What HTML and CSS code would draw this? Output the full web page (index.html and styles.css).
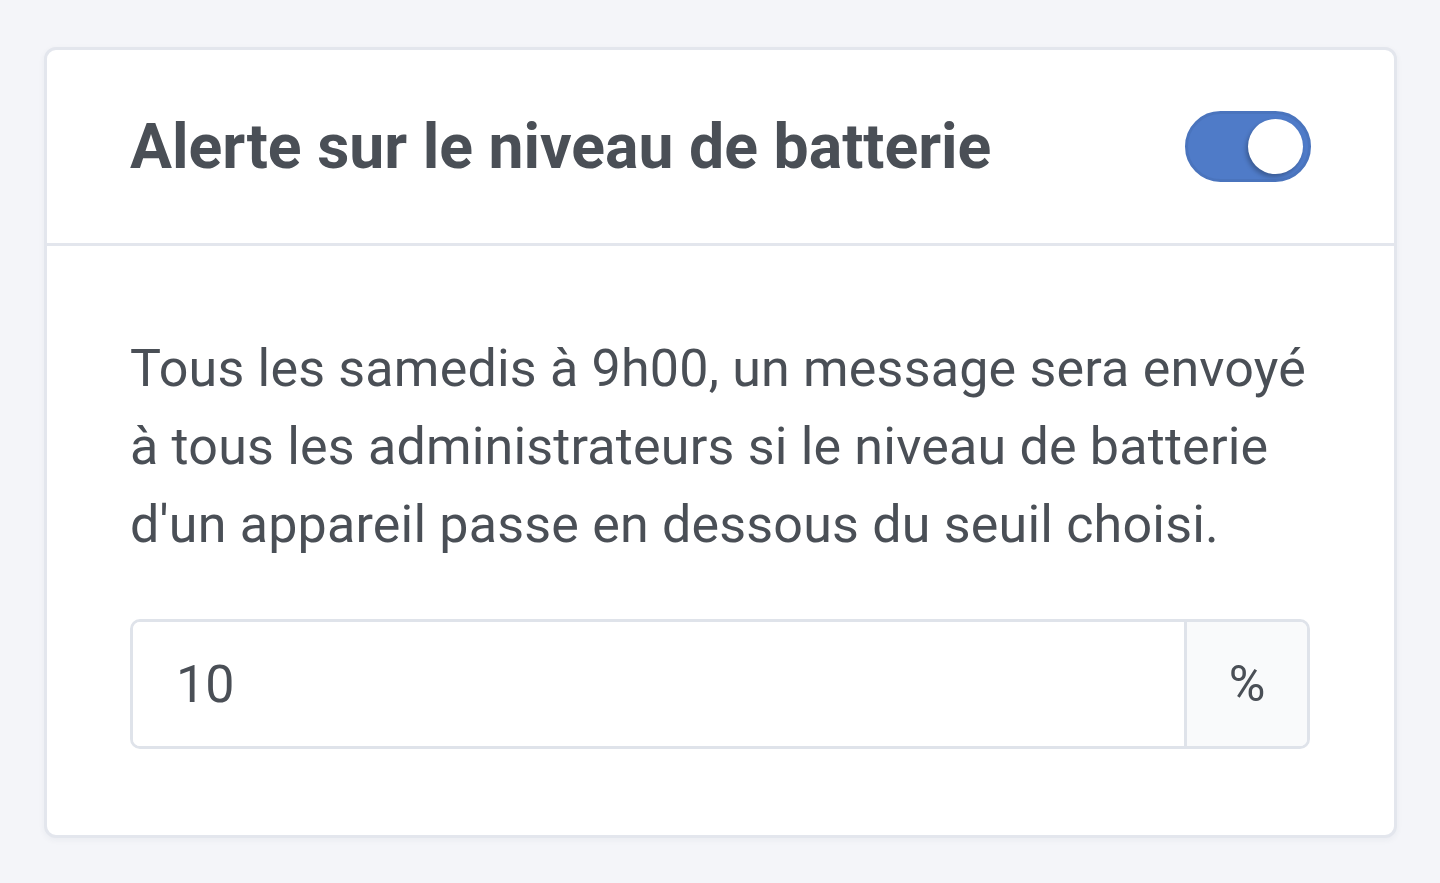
FILE: index.html
```html
<!DOCTYPE html>
<html lang="fr">
<head>
    <meta charset="UTF-8">
    <meta name="viewport" content="width=device-width, initial-scale=1.0">
    <title>Alerte batterie</title>
    <link rel="stylesheet" href="styles.css">
</head>
<body>
    <main class="card">
        <div class="card-header">
            <h2 class="card-title">Alerte sur le niveau de batterie</h2>
            <label class="switch">
                <input type="checkbox" checked>
                <span class="slider"></span>
            </label>
        </div>
        <div class="card-body">
            <p class="card-text">Tous les samedis à 9h00, un message sera envoyé à tous les administrateurs si le niveau de batterie d'un appareil passe en dessous du seuil choisi.</p>
            <div class="input-group">
                <input type="text" class="form-control" value="10">
                <span class="input-addon">%</span>
            </div>
        </div>
    </main>
</body>
</html>
```

FILE: styles.css
```css
/* Page */
body {
    margin: 0;
    padding: 47px 43px 45px 44px;
    background-color: #f4f5f9;
    font-family: Roboto, "Liberation Sans", sans-serif;
    color: #4a4f56;
}

/* Card */
.card {
    background-color: #fff;
    border: 3px solid #e3e6ed;
    border-radius: 12px;
    box-shadow: 0 2px 6px rgba(40, 50, 80, 0.05);
}

.card-header {
    height: 193px;
    padding: 0 83px;
    display: flex;
    align-items: center;
    justify-content: space-between;
    border-bottom: 3px solid #e3e6ed;
}

.card-title {
    margin: 0;
    font-size: 62.5px;
    font-weight: 700;
    color: #4a4f56;
}

/* Toggle switch */
.switch {
    position: relative;
    display: inline-block;
    width: 126px;
    height: 71px;
}

.switch input {
    opacity: 0;
    width: 0;
    height: 0;
}

.slider {
    position: absolute;
    inset: 0;
    background-color: #4f7bc8;
    border: 3px solid #4a74bd;
    border-radius: 36px;
    box-sizing: border-box;
    cursor: pointer;
}

.slider::before {
    content: "";
    position: absolute;
    top: 5px;
    right: 5px;
    width: 55px;
    height: 55px;
    background-color: #fff;
    border-radius: 50%;
    box-shadow: -2px 3px 4px rgba(0, 0, 0, 0.25);
}

/* Body */
.card-body {
    padding: 84px 84px 86px 83px;
}

.card-text {
    margin: 0 0 55px;
    font-size: 52px;
    line-height: 78px;
    letter-spacing: 0.2px;
}

.input-group {
    display: flex;
    height: 130px;
    border: 3px solid #dfe3ea;
    border-radius: 10px;
    box-sizing: border-box;
    overflow: hidden;
}

.form-control {
    flex: 1;
    min-width: 0;
    border: none;
    outline: none;
    padding: 0 43px;
    font-family: inherit;
    font-size: 52px;
    color: #4a4f56;
}

.input-addon {
    width: 120px;
    display: flex;
    align-items: center;
    justify-content: center;
    background-color: #f9fafb;
    border-left: 3px solid #dfe3ea;
    font-size: 50px;
}
```
